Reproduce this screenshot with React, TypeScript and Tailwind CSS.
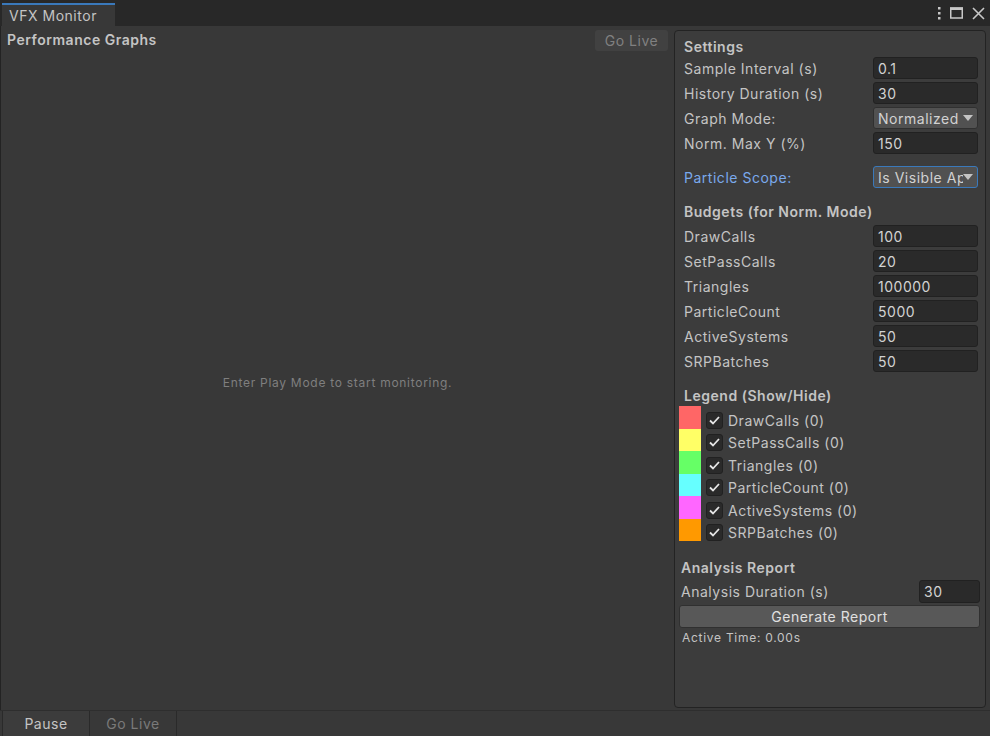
import React from "react";

const font = { fontFamily: "Inter, 'Noto Sans', sans-serif" };

function Field({ label, value, blue }: { label: string; value: string; blue?: boolean }) {
  return (
    <div className="flex h-[22px] items-center justify-between">
      <span className={blue ? "text-[#7aa9ec]" : "text-[#c4c4c4]"}>{label}</span>
      <div className="flex h-[22px] w-[105px] items-center rounded-[3px] border border-[#212121] bg-[#2a2a2a] px-[4px] text-[#d2d2d2]">
        {value}
      </div>
    </div>
  );
}

function Dropdown({ label, value, blue }: { label: string; value: string; blue?: boolean }) {
  return (
    <div className="flex h-[22px] items-center justify-between">
      <span className={blue ? "text-[#7aa9ec]" : "text-[#c4c4c4]"}>{label}</span>
      <div
        className={`flex h-[22px] w-[105px] items-center overflow-hidden rounded-[3px] border pl-[4px] pr-[4px] text-[#d2d2d2] ${
          blue ? "border-[#3a79bb] bg-[#515151]" : "border-[#303030] bg-[#515151]"
        }`}
      >
        <span className="flex-1 overflow-hidden whitespace-nowrap">{value}</span>
        <svg width="10" height="6" viewBox="0 0 10 6" className="shrink-0">
          <path d="M0 0 L10 0 L5 6 Z" fill="#c4c4c4" />
        </svg>
      </div>
    </div>
  );
}

const legend = [
  { name: "DrawCalls", color: "#ff6666" },
  { name: "SetPassCalls", color: "#ffff66" },
  { name: "Triangles", color: "#66ff66" },
  { name: "ParticleCount", color: "#66ffff" },
  { name: "ActiveSystems", color: "#ff66ff" },
  { name: "SRPBatches", color: "#ff9900" },
];

export default function App() {
  return (
    <div
      className="flex h-[736px] w-[990px] flex-col overflow-hidden bg-[#383838] text-[13px] tracking-[0.04em] text-[#c4c4c4]"
      style={font}
    >
      {/* Tab strip */}
      <div className="flex h-[26px] items-end bg-[#282828]">
        <div className="ml-[2px] flex h-[23px] w-[113px] flex-col bg-[#383838]">
          <div className="h-[2px] bg-[#3a79bb]" />
          <div className="flex flex-1 items-center pl-[7px] text-[14px] text-[#c4c4c4]">VFX Monitor</div>
        </div>
        <div className="flex-1" />
        <div className="flex h-[26px] items-center gap-[9px] pr-[5px]">
          <svg width="4" height="14" viewBox="0 0 4 14">
            <rect x="1" y="1" width="2.5" height="2.5" fill="#c8c8c8" />
            <rect x="1" y="6" width="2.5" height="2.5" fill="#c8c8c8" />
            <rect x="1" y="11" width="2.5" height="2.5" fill="#c8c8c8" />
          </svg>
          <svg width="13" height="12" viewBox="0 0 13 12">
            <rect x="0.75" y="1" width="11.5" height="10" fill="none" stroke="#c8c8c8" strokeWidth="1.5" />
            <rect x="0" y="0.5" width="13" height="2.5" fill="#c8c8c8" />
          </svg>
          <svg width="13" height="13" viewBox="0 0 13 13">
            <path d="M1 1 L12 12 M12 1 L1 12" stroke="#c8c8c8" strokeWidth="1.6" />
          </svg>
        </div>
      </div>

      {/* Body */}
      <div className="flex flex-1 border-l border-[#232323]">
        {/* Graph area */}
        <div className="flex flex-1 flex-col">
          <div className="flex h-[30px] items-start justify-between pl-[6px] pr-[6px] pt-[4px]">
            <span className="text-[14px] font-semibold leading-[20px] text-[#c4c4c4]">Performance Graphs</span>
            <div className="flex h-[21px] w-[73px] items-center justify-center rounded-[3px] bg-[#414141] text-[14px] text-[#808080]">
              Go Live
            </div>
          </div>
          <div className="flex flex-1 items-center justify-center text-[12px] tracking-[0.06em] text-[#7f7f7f]">
            Enter Play Mode to start monitoring.
          </div>
        </div>

        {/* Side panel */}
        <div className="mb-[2px] mr-[4px] mt-[4px] flex w-[312px] flex-col rounded-[4px] border border-[#232323] bg-[#3c3c3c] pl-[9px] pr-[7px] pt-[4px] text-[14px]">
          <div className="flex h-[22px] items-center font-semibold">Settings</div>
          <div className="flex flex-col gap-[3px]">
            <Field label="Sample Interval (s)" value="0.1" />
            <Field label="History Duration (s)" value="30" />
            <Dropdown label="Graph Mode:" value="Normalized" />
            <Field label="Norm. Max Y (%)" value="150" />
          </div>
          <div className="mt-[12px]">
            <Dropdown label="Particle Scope:" value="Is Visible Ap" blue />
          </div>

          <div className="mt-[12px] flex h-[22px] items-center font-semibold">Budgets (for Norm. Mode)</div>
          <div className="mt-[3px] flex flex-col gap-[3px]">
            <Field label="DrawCalls" value="100" />
            <Field label="SetPassCalls" value="20" />
            <Field label="Triangles" value="100000" />
            <Field label="ParticleCount" value="5000" />
            <Field label="ActiveSystems" value="50" />
            <Field label="SRPBatches" value="50" />
          </div>

          <div className="mt-[12px] flex h-[22px] items-center font-semibold">Legend (Show/Hide)</div>
          <div className="-ml-[5px] flex flex-col">
            {legend.map((l) => (
              <div key={l.name} className="flex h-[22.5px]">
                <div className="w-[22px]" style={{ backgroundColor: l.color }} />
                <div className="ml-[5px] flex h-[17px] items-center self-end">
                  <div className="flex h-[17px] w-[17px] items-center justify-center rounded-[3px] border border-[#212121] bg-[#2a2a2a]">
                    <svg width="11" height="9" viewBox="0 0 11 9">
                      <path d="M1 4.5 L4 7.5 L10 1" fill="none" stroke="#e6e6e6" strokeWidth="1.8" />
                    </svg>
                  </div>
                  <span className="ml-[5px]">{l.name} (0)</span>
                </div>
              </div>
            ))}
          </div>

          <div className="-ml-[3px] mt-[15px] flex h-[22px] items-center font-semibold">Analysis Report</div>
          <div className="-ml-[3px] mr-[-2px] mt-[2px] flex h-[22px] items-center justify-between">
            <span>Analysis Duration (s)</span>
            <div className="flex h-[23px] w-[61px] items-center rounded-[3px] border border-[#212121] bg-[#2a2a2a] px-[4px] text-[#d2d2d2]">
              30
            </div>
          </div>
          <div className="-ml-[5px] mr-[-2px] mt-[3px] flex h-[23px] items-center justify-center rounded-[3px] border border-[#303030] bg-[#585858] text-[#e0e0e0]">
            Generate Report
          </div>
          <div className="-ml-[2px] mt-[2px] text-[12px] leading-[16px] tracking-[0.06em] text-[#c4c4c4]">
            Active Time: 0.00s
          </div>
        </div>
      </div>

      {/* Bottom toolbar */}
      <div className="flex h-[26px] border-t border-[#2e2e2e] bg-[#383838]">
        <div className="ml-[2px] flex w-[88px] items-center justify-center border-l border-r border-[#2a2a2a] bg-[#3c3c3c] text-[14px] text-[#c4c4c4]">
          Pause
        </div>
        <div className="flex w-[87px] items-center justify-center border-r border-[#2a2a2a] text-[14px] text-[#7a7a7a]">
          Go Live
        </div>
      </div>
    </div>
  );
}
